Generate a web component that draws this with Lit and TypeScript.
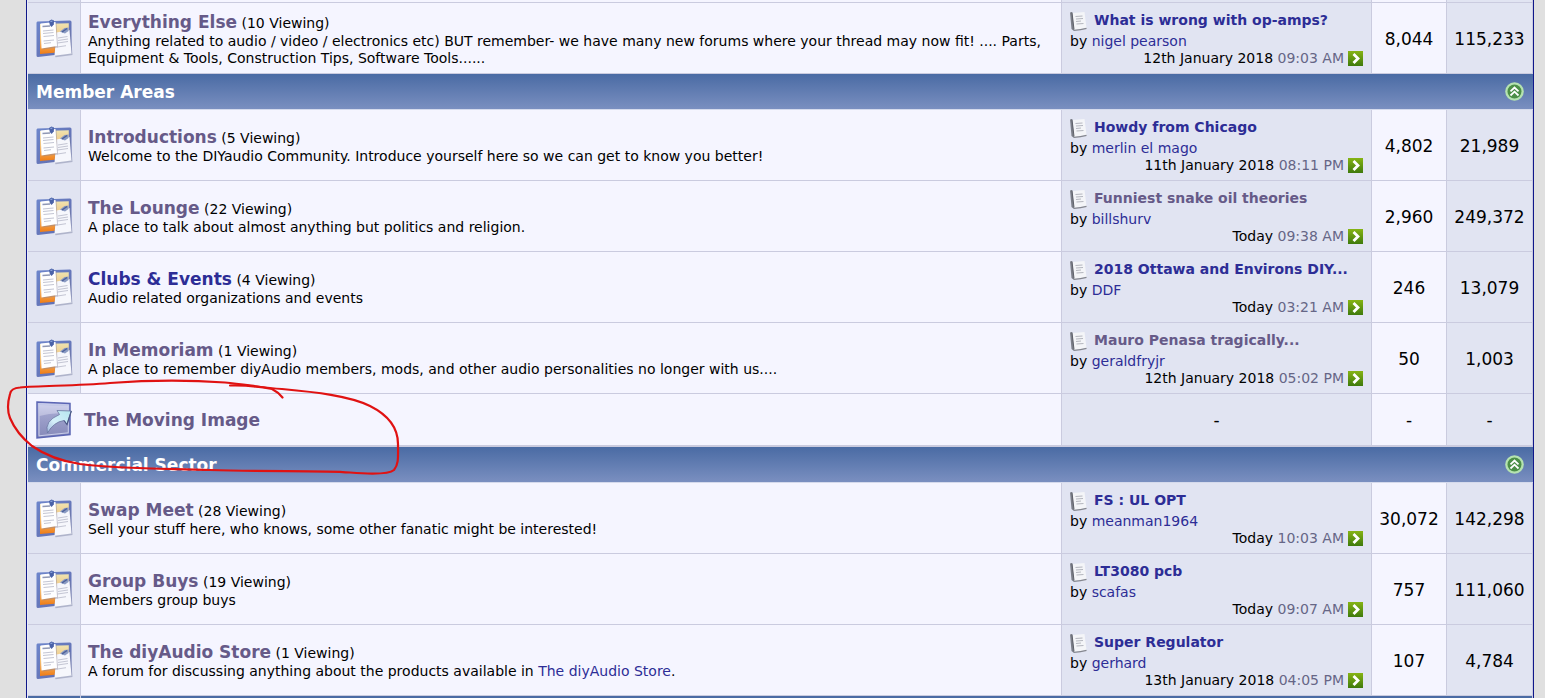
import { LitElement, html, css, svg, nothing } from "lit";
import { customElement, property } from "lit/decorators.js";

interface Post {
  title: string;
  author: string;
  day: string;
  time: string;
  visited?: boolean;
}

interface Forum {
  name: string;
  unvisited?: boolean;
  viewing?: number;
  about?: unknown;
  post?: Post;
  threads?: string;
  posts?: string;
}

interface Section {
  name?: string;
  forums: Forum[];
}

const sections: Section[] = [
  {
    forums: [
      {
        name: "Everything Else",
        viewing: 10,
        about:
          "Anything related to audio / video / electronics etc) BUT remember- we have many new forums where your thread may now fit! .... Parts, Equipment & Tools, Construction Tips, Software Tools......",
        post: { title: "What is wrong with op-amps?", author: "nigel pearson", day: "12th January 2018", time: "09:03 AM" },
        threads: "8,044",
        posts: "115,233",
      },
    ],
  },
  {
    name: "Member Areas",
    forums: [
      {
        name: "Introductions",
        viewing: 5,
        about: "Welcome to the DIYaudio Community. Introduce yourself here so we can get to know you better!",
        post: { title: "Howdy from Chicago", author: "merlin el mago", day: "11th January 2018", time: "08:11 PM" },
        threads: "4,802",
        posts: "21,989",
      },
      {
        name: "The Lounge",
        viewing: 22,
        about: "A place to talk about almost anything but politics and religion.",
        post: { title: "Funniest snake oil theories", author: "billshurv", day: "Today", time: "09:38 AM", visited: true },
        threads: "2,960",
        posts: "249,372",
      },
      {
        name: "Clubs & Events",
        unvisited: true,
        viewing: 4,
        about: "Audio related organizations and events",
        post: { title: "2018 Ottawa and Environs DIY...", author: "DDF", day: "Today", time: "03:21 AM" },
        threads: "246",
        posts: "13,079",
      },
      {
        name: "In Memoriam",
        viewing: 1,
        about: "A place to remember diyAudio members, mods, and other audio personalities no longer with us....",
        post: { title: "Mauro Penasa tragically...", author: "geraldfryjr", day: "12th January 2018", time: "05:02 PM", visited: true },
        threads: "50",
        posts: "1,003",
      },
      { name: "The Moving Image" },
    ],
  },
  {
    name: "Commercial Sector",
    forums: [
      {
        name: "Swap Meet",
        viewing: 28,
        about: "Sell your stuff here, who knows, some other fanatic might be interested!",
        post: { title: "FS : UL OPT", author: "meanman1964", day: "Today", time: "10:03 AM" },
        threads: "30,072",
        posts: "142,298",
      },
      {
        name: "Group Buys",
        viewing: 19,
        about: "Members group buys",
        post: { title: "LT3080 pcb", author: "scafas", day: "Today", time: "09:07 AM" },
        threads: "757",
        posts: "111,060",
      },
      {
        name: "The diyAudio Store",
        viewing: 1,
        about: html`A forum for discussing anything about the products available in <a href="#">The diyAudio Store</a>.`,
        post: { title: "Super Regulator", author: "gerhard", day: "13th January 2018", time: "04:05 PM" },
        threads: "107",
        posts: "4,784",
      },
    ],
  },
];

const boardArt = svg`
  <defs>
    <linearGradient id="cork" x1="0" y1="0" x2="0" y2="1">
      <stop offset="0" stop-color="#efe3b0"/><stop offset=".5" stop-color="#f3c27a"/><stop offset="1" stop-color="#f07c14"/>
    </linearGradient>
    <linearGradient id="frame" x1="0" y1="0" x2="1" y2="1">
      <stop offset="0" stop-color="#6d86cc"/><stop offset="1" stop-color="#5f69aa"/>
    </linearGradient>
  </defs>
  <path d="M1.500 2.500 34 1.500Q35.500 1.500 35.500 3V34L2 38Q.5 38 .5 36.500V4Q.5 2.500 1.500 2.500Z" fill="url(#frame)"/>
  <path d="M4 5 32.800 4.200V32.500L4 35Z" fill="url(#cork)"/>
  <path d="M20 15 34.500 11 36.500 36 19.500 38.300 18.500 35.500Z" fill="#7d84a4" opacity=".5"/>
  <path d="M20.500 13.500 33.500 11 35.500 34.500 18.500 36.800Z" fill="#f6f7fc"/>
  <path d="M22 19 31.500 17.500M22 21.500 32 20M21.500 24 32 22.500M21.500 28 30 26.700" stroke="#c3c5d3" fill="none"/>
  <path d="M6 6 20.500 4 22 28.500 6.500 30.500Z" fill="#8b8598" opacity=".45"/>
  <path d="M4.500 4.500 19.500 3 21 27 5.500 29.500Z" fill="#fefeff"/>
  <path d="M6.500 7.500 14 7" stroke="#8f97b4" stroke-width="1.500"/>
  <path d="M7 12 17.500 11M7 14.500 17.500 13.500M7.500 17.500 18 16.500M7.500 22 18 21M8 24.500 15 23.700" stroke="#c3c5d3" fill="none"/>
  <path d="M13 2 15.500 .5 18 1.500 17.800 5.500 15.500 8 13.800 6Z" fill="#4a62a8"/>
  <path d="M14.500 2.500 16.500 2" stroke="#9db4e8"/>
  <path d="M24 12.500 28.500 9 32.500 8.500 32.500 12 29 14.500 26 13.500Z" fill="#8b9cc4"/>
  <path d="M26 13 31 9.500" stroke="#4c5f98" stroke-width="1.500"/>`;

const linkArt = svg`
  <defs>
    <linearGradient id="pane" x1="0" y1="0" x2="0" y2="1">
      <stop offset="0" stop-color="#c3c9ec"/><stop offset=".35" stop-color="#a0a3cd"/><stop offset="1" stop-color="#8588b8"/>
    </linearGradient>
    <linearGradient id="arrow" x1="1" y1="0" x2="0" y2="1">
      <stop offset="0" stop-color="#b4e6ef"/><stop offset=".6" stop-color="#d5f0fa"/><stop offset="1" stop-color="#9fb5dd"/>
    </linearGradient>
  </defs>
  <path d="M1 1 34 2.500V33.500L1 37Z" fill="url(#pane)" stroke="#5b65b4" stroke-width="1.500"/>
  <path d="M3 3 32.300 4.200V31.800L3 34.800Z" fill="none" stroke="#c9cdea"/>
  <path d="M3.500 15Q18 11 32 13V5L3.500 4Z" fill="#e3e2f3" opacity=".45"/>
  <path d="M21 9.500 35.300 10 31 23.500 28 19.500Q17.500 21 11.500 32Q8 20 23.500 13.500Z" fill="url(#arrow)" stroke="#69759f" stroke-width=".8"/>
  <path d="M35.300 10 31 23.500 28 19.500" fill="none" stroke="#4d5986" stroke-width="1.200"/>`;

const sheetArt = svg`
  <path d="M0 1.500 2 1 4.500 17.500 4 20 1.500 18Z" fill="#7b7e88"/>
  <path d="M2.500 2 14.500 1 16.500 17Q10 18 4 19.300Z" fill="#f4f5f8"/>
  <path d="M2 1.500 4 18.500" stroke="#5d5f68" stroke-width="1"/>
  <path d="M4 19.400Q11 18.900 16.500 17.300" fill="none" stroke="#85878f" stroke-width="1.200"/>
  <path d="M5.500 5.500 12.500 5M6 8 13 7.500M6 10.500 11 10M6.500 13 13.500 12.500" stroke="#b4b6be" stroke-width="1.200" fill="none"/>`;

const goArt = svg`
  <defs>
    <linearGradient id="green" x1="0" y1="0" x2="0" y2="1">
      <stop offset="0" stop-color="#86b414"/><stop offset="1" stop-color="#3f7a0c"/>
    </linearGradient>
  </defs>
  <rect width="15" height="15" fill="url(#green)"/>
  <path d="M5.500 3 10 7.500 5.500 12" fill="none" stroke="#fff" stroke-width="2.800"/>`;

const collapseArt = svg`
  <circle cx="9.500" cy="9.500" r="9.300" fill="#b5e3b0"/>
  <circle cx="9.500" cy="9.500" r="7" fill="#4c8f47"/>
  <path d="M5.500 9.300 9.500 5.500 13.500 9.300M5.500 13.500 9.500 9.700 13.500 13.500" fill="none" stroke="#fff" stroke-width="1.800"/>`;

@customElement("forum-icon")
class ForumIcon extends LitElement {
  @property() kind = "board";

  static styles = css`
    :host { display: block; }
    svg { display: block; }
  `;

  render() {
    switch (this.kind) {
      case "link":
        return html`<svg width="36" height="38" viewBox="0 0 36 38" aria-hidden="true">${linkArt}</svg>`;
      case "sheet":
        return html`<svg width="17" height="20" viewBox="0 0 17 20" aria-hidden="true">${sheetArt}</svg>`;
      case "go":
        return html`<svg width="15" height="15" viewBox="0 0 15 15" aria-hidden="true">${goArt}</svg>`;
      case "collapse":
        return html`<svg width="19" height="19" viewBox="0 0 19 19" aria-hidden="true">${collapseArt}</svg>`;
      default:
        return html`<svg width="37" height="39" viewBox="0 0 37 39" aria-hidden="true">${boardArt}</svg>`;
    }
  }
}

@customElement("app-root")
class AppRoot extends LitElement {
  static styles = css`
    :host {
      display: block;
      min-height: 100vh;
      box-sizing: border-box;
      padding: 0 11px 0 26px;
      background: #e0e0e0;
      color: #000;
      font: 14px/17px Verdana, "DejaVu Sans", sans-serif;
    }
    .page {
      position: relative;
      border: solid #10188a;
      border-width: 0 1px;
      background: #e9ebf6;
      padding-left: 1px;
    }
    table {
      width: 100%;
      table-layout: fixed;
      border-collapse: separate;
      border-spacing: 0;
    }
    .c-icon { width: 53px; }
    .c-last { width: 310px; }
    .c-threads { width: 75px; }
    .c-posts { width: 86px; }
    td {
      box-sizing: border-box;
      height: 71px;
      padding: 2px 7px 0;
      border: solid #cacbdf;
      border-width: 0 1px 1px 0;
      background: #f5f5ff;
      vertical-align: middle;
    }
    td.alt { background: #e1e4f2; }
    .lead td {
      height: 3px;
      padding: 0;
    }
    .tail td {
      height: 2px;
      padding: 0;
      background: #4a6ba4;
      border-bottom: 0;
    }
    .link td { height: 53px; border-bottom-width: 2px; }
    td.icon { padding: 0 0 0 8px; }
    .bar {
      box-sizing: border-box;
      height: 36px;
      padding: 0 9px 0 8px;
      border-bottom: 1px solid #d5daec;
      background: linear-gradient(#4a6ba4, #7a8fc0);
      color: #fff;
      font-size: 17px;
      line-height: 20px;
      text-align: left;
    }
    .bar-row {
      display: flex;
      align-items: center;
      justify-content: space-between;
    }
    button {
      display: block;
      padding: 0;
      border: 0;
      background: none;
      cursor: pointer;
    }
    a { color: #2d2d96; text-decoration: none; }
    a:hover { text-decoration: underline; }
    .name {
      color: #665a88;
      font-size: 17px;
      font-weight: bold;
      line-height: 20px;
    }
    .fresh { color: #2d2d96; }
    .heading { line-height: 20px; }
    .moved {
      display: flex;
      align-items: center;
      gap: 12px;
    }
    td.last { padding: 1px 8px 0; }
    .thread {
      display: flex;
      align-items: center;
      gap: 7px;
      height: 20px;
      margin-bottom: 2px;
      font-weight: bold;
    }
    .seen { color: #665a88; }
    .when {
      display: flex;
      align-items: center;
      justify-content: flex-end;
      gap: 4px;
    }
    .go { display: block; }
    .time { color: #666686; }
    td.num {
      padding: 2px 0 0;
      font-size: 17px;
      text-align: center;
    }
    .mark {
      position: absolute;
      top: 370px;
      left: -27px;
      pointer-events: none;
    }
  `;

  private last(p: Post) {
    return html`
      <div class="thread">
        <forum-icon kind="sheet"></forum-icon>
        <a href="#" class=${p.visited ? "seen" : "new"}>${p.title}</a>
      </div>
      <div>by <a href="#">${p.author}</a></div>
      <div class="when">
        <span>${p.day} <span class="time">${p.time}</span></span>
        <a href="#" class="go" aria-label="Go to last post"><forum-icon kind="go"></forum-icon></a>
      </div>`;
  }

  private row(f: Forum) {
    if (!f.post) {
      return html`<tr class="link">
        <td class="icon" colspan="2">
          <div class="moved"><forum-icon kind="link"></forum-icon><a href="#" class="name">${f.name}</a></div>
        </td>
        <td class="alt num">-</td>
        <td class="num">-</td>
        <td class="alt num">-</td>
      </tr>`;
    }
    return html`<tr>
      <td class="alt icon"><forum-icon></forum-icon></td>
      <td>
        <div class="heading"><a href="#" class="name ${f.unvisited ? "fresh" : ""}">${f.name}</a> (${f.viewing} Viewing)</div>
        <div>${f.about}</div>
      </td>
      <td class="alt last">${this.last(f.post)}</td>
      <td class="num">${f.threads}</td>
      <td class="alt num">${f.posts}</td>
    </tr>`;
  }

  render() {
    return html`<div class="page">
      <table>
        <colgroup>
          <col class="c-icon" /><col /><col class="c-last" /><col class="c-threads" /><col class="c-posts" />
        </colgroup>
        <tbody class="lead"><tr><td class="alt"></td><td></td><td class="alt"></td><td></td><td class="alt"></td></tr></tbody>
        ${sections.map(
          (s) => html`<tbody>
            ${s.name
              ? html`<tr><th class="bar" colspan="5" scope="rowgroup">
                  <div class="bar-row">
                    <span>${s.name}</span>
                    <button type="button" aria-label="Collapse ${s.name}"><forum-icon kind="collapse"></forum-icon></button>
                  </div>
                </th></tr>`
              : nothing}
            ${s.forums.map((f) => this.row(f))}
          </tbody>`
        )}
        <tbody class="tail"><tr><td></td><td colspan="4"></td></tr></tbody>
      </table>
      <svg class="mark" width="420" height="120" viewBox="0 0 420 120" fill="none" stroke="#e01212" stroke-width="2.200" stroke-linecap="round" aria-hidden="true">
        <path d="M230 15.500C250 15 262 17 272 19Q278 22 282.500 27.500"/>
        <path d="M282 19C262 18 245 14 225 12.500C190 10 150 10 110 13C75 16 40 15.500 20 17.500Q11 18 10 24Q6 38 10 48C15 60 22 68 32 76C45 85 60 91 80 94C120 99 160 98.500 210 100C270 102 320 100 350 102.500C368 104 388 105 394 100C399 94 398 86 398 74C398 60 390 46 370 36C350 26 315 22 282 19Z"/>
      </svg>
    </div>`;
  }
}
